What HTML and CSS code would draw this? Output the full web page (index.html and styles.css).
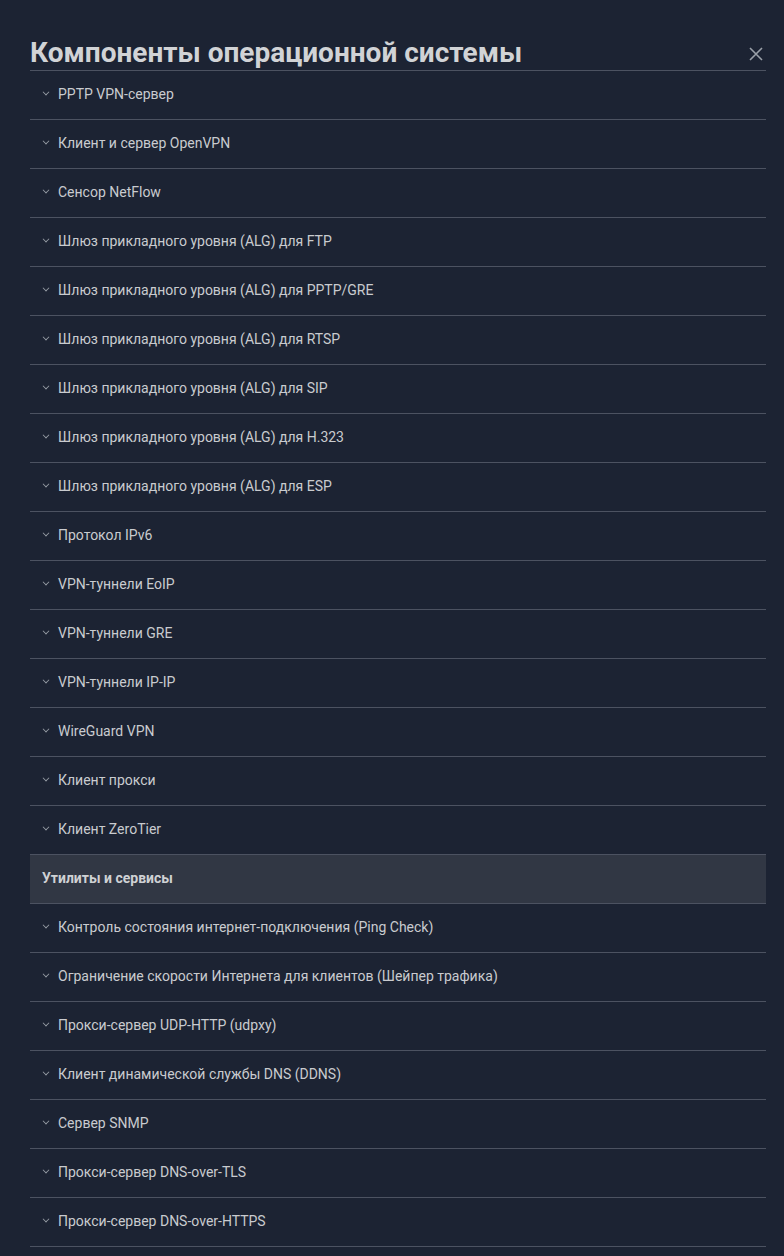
FILE: index.html
```html
<!DOCTYPE html>
<html lang="ru">
<head>
<meta charset="utf-8">
<link rel="stylesheet" href="styles.css">
</head>
<body>
<div class="modal">
  <div class="head">
    <h1 class="title">Компоненты операционной системы</h1>
    <button class="close" aria-label="close">
      <svg width="14" height="14" viewBox="0 0 14 14"><path d="M1 1L13 13M13 1L1 13" stroke="#9aa0a8" stroke-width="1.6" fill="none"/></svg>
    </button>
  </div>
  <ul class="list">
    <li class="row"><span class="chev"></span>PPTP VPN-сервер</li>
    <li class="row"><span class="chev"></span>Клиент и сервер OpenVPN</li>
    <li class="row"><span class="chev"></span>Сенсор NetFlow</li>
    <li class="row"><span class="chev"></span>Шлюз прикладного уровня (ALG) для FTP</li>
    <li class="row"><span class="chev"></span>Шлюз прикладного уровня (ALG) для PPTP/GRE</li>
    <li class="row"><span class="chev"></span>Шлюз прикладного уровня (ALG) для RTSP</li>
    <li class="row"><span class="chev"></span>Шлюз прикладного уровня (ALG) для SIP</li>
    <li class="row"><span class="chev"></span>Шлюз прикладного уровня (ALG) для H.323</li>
    <li class="row"><span class="chev"></span>Шлюз прикладного уровня (ALG) для ESP</li>
    <li class="row"><span class="chev"></span>Протокол IPv6</li>
    <li class="row"><span class="chev"></span>VPN-туннели EoIP</li>
    <li class="row"><span class="chev"></span>VPN-туннели GRE</li>
    <li class="row"><span class="chev"></span>VPN-туннели IP-IP</li>
    <li class="row"><span class="chev"></span>WireGuard VPN</li>
    <li class="row"><span class="chev"></span>Клиент прокси</li>
    <li class="row"><span class="chev"></span>Клиент ZeroTier</li>
    <li class="section">Утилиты и сервисы</li>
    <li class="row"><span class="chev"></span>Контроль состояния интернет-подключения (Ping Check)</li>
    <li class="row"><span class="chev"></span>Ограничение скорости Интернета для клиентов (Шейпер трафика)</li>
    <li class="row"><span class="chev"></span>Прокси-сервер UDP-HTTP (udpxy)</li>
    <li class="row"><span class="chev"></span>Клиент динамической службы DNS (DDNS)</li>
    <li class="row"><span class="chev"></span>Сервер SNMP</li>
    <li class="row"><span class="chev"></span>Прокси-сервер DNS-over-TLS</li>
    <li class="row"><span class="chev"></span>Прокси-сервер DNS-over-HTTPS</li>
  </ul>
</div>
</body>
</html>
```
FILE: styles.css
```css
html, body {
  margin: 0;
  padding: 0;
  background: #1c2333;
  height: 100%;
  overflow: hidden;
}
body {
  font-family: Roboto, "Liberation Sans", sans-serif;
  color: #c9cbcf;
}
.modal {
  padding: 0 18px 0 30px;
}
.head {
  display: flex;
  align-items: flex-end;
  justify-content: space-between;
  height: 70px;
  border-bottom: 1px solid #4c5261;
}
.title {
  margin: 0 0 -1px 0;
  font-size: 28px;
  font-weight: 700;
  color: #d1d3d6;
  line-height: 36px;
}
.close {
  background: none;
  border: 0;
  padding: 0;
  width: 14px;
  height: 14px;
  margin: 0 3px 9px 0;
  display: flex;
}
.list {
  list-style: none;
  margin: 0;
  padding: 0;
}
.row {
  height: 48px;
  box-sizing: border-box;
  padding-bottom: 2px;
  display: flex;
  align-items: center;
  border-bottom: 1px solid #4c5261;
  font-size: 14px;
  padding-left: 12px;
}
.row {
  height: 49px;
}
.chev {
  width: 5px;
  height: 5px;
  border-right: 1.3px solid #9aa0a8;
  border-bottom: 1.3px solid #9aa0a8;
  transform: translateY(-2px) rotate(45deg) scale(0.8);
  margin-right: 9px;
  margin-left: 1px;
}
.section {
  height: 49px;
  box-sizing: border-box;
  padding-bottom: 2px;
  display: flex;
  align-items: center;
  background: #313744;
  border-bottom: 1px solid #4c5261;
  font-size: 14px;
  font-weight: 700;
  padding-left: 12px;
  color: #cfd1d4;
}
```
